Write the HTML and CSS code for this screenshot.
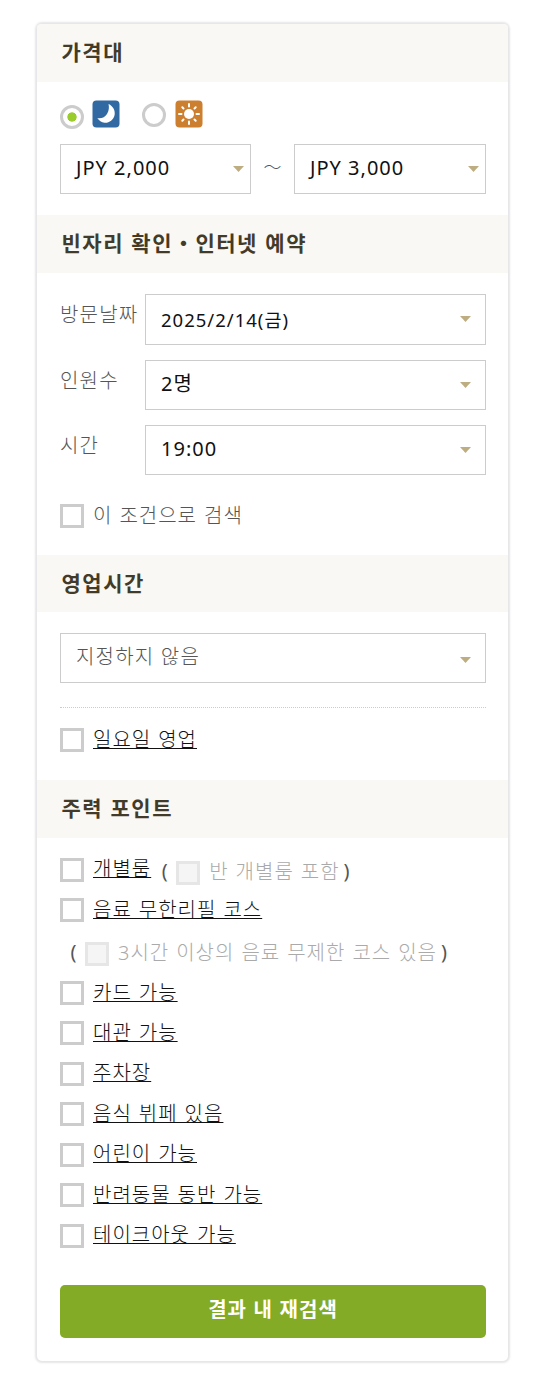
FILE: index.html
```html
<!DOCTYPE html>
<html lang="ko">

<head>
    <meta charset="UTF-8">
    <meta name="viewport" content="width=device-width, initial-scale=1.0">
    <title>재검색</title>
    <link rel="stylesheet" href="styles.css">
</head>

<body>
    <form class="panel">
        <h2 class="panel-title">가격대</h2>
        <div class="section section-price">
            <div class="meal">
                <input type="radio" class="radio radio-dinner" name="meal" aria-label="저녁" checked>
                <svg class="meal-icon" viewBox="0 0 28 28">
                    <rect x="0.5" y="0.5" width="27" height="27" rx="4" fill="#3169a2" />
                    <path d="M16.5 4C21 6 23.5 10.5 22.6 15C21.5 20 17 23.2 12.5 22.8C9.5 22.5 7 20.7 5.3 18C9 18.8 13 17.5 15 14C17 10.8 17.3 7.3 16.5 4Z" fill="#fff" />
                </svg>
                <input type="radio" class="radio radio-lunch" name="meal" aria-label="점심">
                <svg class="meal-icon" viewBox="0 0 28 28">
                    <rect x="0.5" y="0.5" width="27" height="27" rx="4" fill="#cb7f2f" />
                    <circle cx="14" cy="14" r="5" fill="#fff" />
                    <path d="M14 4V6.5M14 21.5V24M4 14H6.5M21.5 14H24M7.3 7.3l1.2 1.2M19.5 19.5l1.2 1.2M7.3 20.7l1.2-1.2M19.5 8.5l1.2-1.2" stroke="#fff" stroke-width="2" stroke-linecap="round" />
                </svg>
            </div>
            <div class="range">
                <div class="select select-price"><select aria-label="최저"><option>JPY 2,000</option></select></div>
                <span class="tilde">～</span>
                <div class="select select-price"><select aria-label="최고"><option>JPY 3,000</option></select></div>
            </div>
        </div>

        <h2 class="panel-title">빈자리 확인・인터넷 예약</h2>
        <div class="section section-reserve">
            <div class="field">
                <span class="field-name">방문날짜</span>
                <div class="select select-date"><select aria-label="방문날짜"><option>2025/2/14(금)</option></select></div>
            </div>
            <div class="field">
                <span class="field-name">인원수</span>
                <div class="select"><select aria-label="인원수"><option>2명</option></select></div>
            </div>
            <div class="field">
                <span class="field-name">시간</span>
                <div class="select"><select aria-label="시간"><option>19:00</option></select></div>
            </div>
            <label class="check"><input type="checkbox" class="box"><span>이 조건으로 검색</span></label>
        </div>

        <h2 class="panel-title panel-title-hours">영업시간</h2>
        <div class="section section-hours">
            <div class="select select-hours"><select aria-label="영업시간"><option>지정하지 않음</option></select></div>
            <div class="sunday">
                <label class="check"><input type="checkbox" class="box"><a class="link">일요일 영업</a></label>
            </div>
        </div>

        <h2 class="panel-title">주력 포인트</h2>
        <div class="section section-points">
            <div class="row">
                <label class="check"><input type="checkbox" class="box"><a class="link">개별룸</a></label>
                <div class="sub">
                    <span class="paren">(</span>
                    <label class="check check-off"><input type="checkbox" class="box" disabled><span>반 개별룸 포함</span></label>
                    <span class="paren">)</span>
                </div>
            </div>
            <label class="check"><input type="checkbox" class="box"><a class="link">음료 무한리필 코스</a></label>
            <div class="sub sub-line">
                <span class="paren">(</span>
                <label class="check check-off"><input type="checkbox" class="box" disabled><span>3시간 이상의 음료 무제한 코스 있음</span></label>
                <span class="paren">)</span>
            </div>
            <label class="check"><input type="checkbox" class="box"><a class="link">카드 가능</a></label>
            <label class="check"><input type="checkbox" class="box"><a class="link">대관 가능</a></label>
            <label class="check"><input type="checkbox" class="box"><a class="link">주차장</a></label>
            <label class="check"><input type="checkbox" class="box"><a class="link">음식 뷔페 있음</a></label>
            <label class="check"><input type="checkbox" class="box"><a class="link">어린이 가능</a></label>
            <label class="check"><input type="checkbox" class="box"><a class="link">반려동물 동반 가능</a></label>
            <label class="check"><input type="checkbox" class="box"><a class="link">테이크아웃 가능</a></label>
            <button type="button" class="btn">결과 내 재검색</button>
        </div>
    </form>
</body>

</html>
```
FILE: styles.css
```css
* {
    box-sizing: border-box;
}

body {
    margin: 0;
    padding: 24px 31px 17px 37px;
    background-color: #fff;
    font-family: "Noto Sans", "Noto Sans CJK KR", sans-serif;
    font-size: 20px;
    font-weight: 300;
    letter-spacing: 1px;
    word-spacing: 0.8px;
    color: #555;
    white-space: nowrap;
}

.panel {
    height: 1337px;
    border-radius: 5px;
    box-shadow: 0 0 2px 2px #e6e6e8;
}

.panel-title {
    height: 58px;
    margin: 0;
    padding: 0 24.5px;
    background-color: #f9f8f4;
    font-family: "Noto Sans CJK KR", sans-serif;
    font-size: 21px;
    font-weight: bold;
    letter-spacing: 1.5px;
    word-spacing: 0;
    line-height: 54px;
    color: #433b29;
}

.panel-title:first-child {
    border-radius: 4px 4px 0 0;
}

.panel-title-hours {
    height: 57px;
}

.section {
    padding: 0 22px 0 23px;
}

.section-price {
    height: 133px;
    padding-top: 18px;
}

.section-reserve {
    height: 282px;
    padding-top: 21px;
}

.section-hours {
    height: 168px;
    padding-top: 21px;
}

.section-points {
    padding-top: 11.6px;
}

/* price */
.meal {
    display: flex;
    height: 28px;
    margin-bottom: 16px;
}

.meal-icon {
    width: 28px;
    height: 28px;
    margin-left: 8px;
}

.radio {
    width: 24px;
    height: 24px;
    margin: 0;
    border: 3px solid #ccc;
    border-radius: 50%;
    appearance: none;
}

.radio-dinner {
    margin-top: 5px;
}

.radio-lunch {
    margin: 3px 0.5px 0 22px;
}

.radio:checked {
    background: radial-gradient(circle, #9acd2c 4.3px, #fff 5px);
}

.range {
    display: flex;
    justify-content: space-between;
}

.tilde {
    padding-left: 1px;
    font-family: "Noto Sans CJK KR", sans-serif;
    font-size: 18px;
    line-height: 44px;
}

.select {
    position: relative;
    flex: 1;
    height: 50px;
}

.select:after {
    position: absolute;
    top: 22px;
    right: 15px;
    width: 11px;
    height: 6px;
    content: "";
    background-color: #bfad82;
    clip-path: polygon(0 0, 100% 0, 50% 100%);
}

.select select {
    width: 100%;
    height: 100%;
    padding: 0 10px 3px;
    border: 1px solid #ccc;
    border-radius: 0;
    background-color: #fff;
    font: inherit;
    font-weight: 400;
    letter-spacing: 1px;
    text-indent: 5px;
    color: #111;
    appearance: none;
}

.select-price {
    flex: 0 0 191px;
}

.select-price + .tilde + .select-price {
    flex-basis: 192px;
}

.select-price:after {
    right: 7px;
}

.select-date {
    height: 51px;
}

.select-date select {
    padding-bottom: 1px;
    font-size: 18.5px;
}

.select-hours select {
    font-weight: 300;
    letter-spacing: 1.2px;
    color: #555;
}

.select-hours:after {
    top: 24px;
}

.field {
    display: flex;
    margin-bottom: 15px;
}

.field-name {
    width: 85px;
    line-height: 41px;
    letter-spacing: 1.2px;
}

/* checkboxes */
.check {
    display: flex;
    align-items: center;
    height: 40.45px;
}

.check > :last-child {
    margin: 0 0 1px 9px;
    line-height: 26px;
}

.box {
    flex: none;
    width: 24px;
    height: 24px;
    margin: 0;
    border: 3px solid #ccc;
    appearance: none;
}

.box:disabled {
    border-color: #e6e6e6;
    background-color: #f5f5f5;
}

.link {
    color: #111;
    text-decoration: underline;
    text-decoration-thickness: 1px;
    text-underline-offset: 1px;
}

.section-reserve .check {
    margin-top: 21px;
}

.sunday {
    margin-top: 24px;
    padding-top: 12px;
    border-top: 1px dotted #ccc;
}

.row {
    display: flex;
}

.sub {
    display: flex;
    align-items: center;
    height: 40px;
    margin: 3px 0 -3px 10.5px;
}

.sub-line {
    height: 38.3px;
    margin: 4.05px 0 0 10.5px;
}

.paren {
    margin-bottom: 4px;
    font-weight: 400;
}

.paren:first-child {
    margin-right: 7.5px;
}

.paren:last-child {
    margin-left: 4px;
}

.check-off {
    color: #aaa;
}

.btn {
    display: block;
    width: 100%;
    height: 53px;
    margin-top: 29px;
    padding: 0 0 6px;
    border: none;
    border-radius: 5px;
    background-color: #83ab25;
    font-family: "Noto Sans CJK KR", sans-serif;
    font-size: 20px;
    font-weight: bold;
    letter-spacing: 1px;
    color: #fff;
    cursor: pointer;
}
```
